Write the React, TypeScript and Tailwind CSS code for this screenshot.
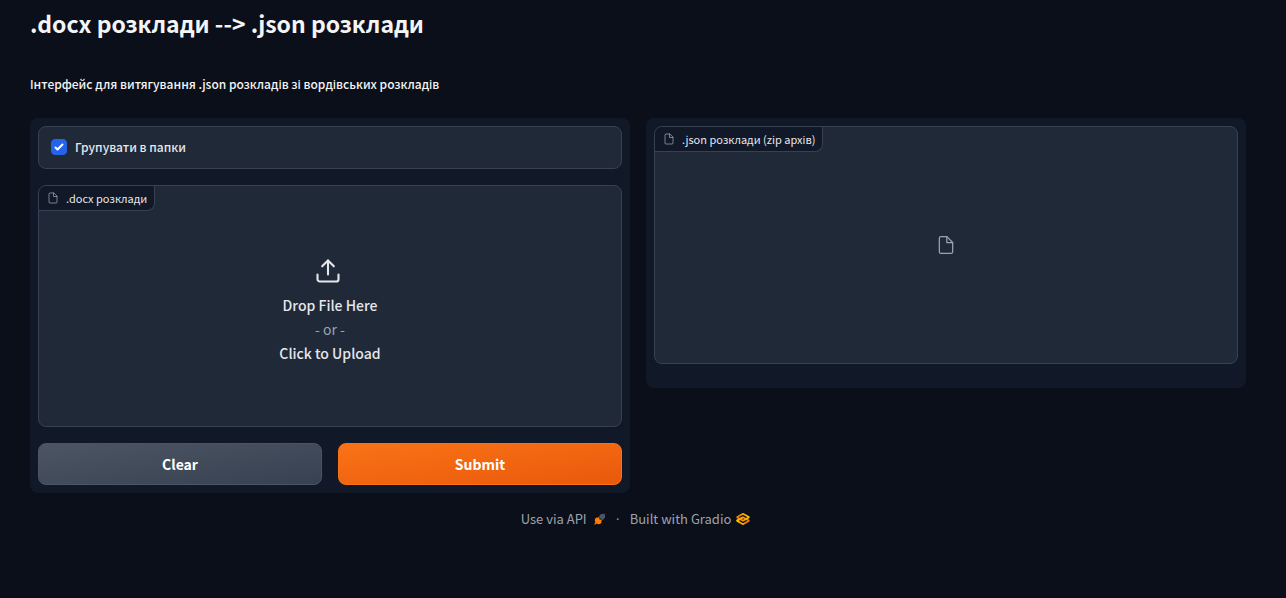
import { useState } from "react";
import type { ReactNode } from "react";

function FileIcon({ className }: { className: string }) {
  return (
    <svg className={className} viewBox="0 0 24 24" fill="none" stroke="currentColor" strokeWidth="1.5" strokeLinecap="round" strokeLinejoin="round" aria-hidden="true">
      <path d="M13 2H6a2 2 0 0 0-2 2v16a2 2 0 0 0 2 2h12a2 2 0 0 0 2-2V9z" />
      <polyline points="13 2 13 9 20 9" />
    </svg>
  );
}

function UploadIcon() {
  return (
    <svg className="mr-1 size-7" viewBox="0 0 24 24" fill="none" stroke="currentColor" strokeWidth="1.8" strokeLinecap="round" strokeLinejoin="round" aria-hidden="true">
      <path d="M21 15v4a2 2 0 0 1-2 2H5a2 2 0 0 1-2-2v-4" />
      <polyline points="17 8 12 3 7 8" />
      <line x1="12" y1="3" x2="12" y2="15" />
    </svg>
  );
}

function RocketIcon() {
  return (
    <svg className="size-3" viewBox="0 0 24 24" aria-hidden="true">
      <path d="M23.500.500l-3.500 2c-3-1.500-5.500-.8-7.500 1.200L10.500 6c-.5 1-.4 2 .4 2.800l4.300 4.300c.8.8 1.800.9 2.800.3l2.300-1.900c2-2 2.700-4.500 1.200-7.500z" fill="#4b5563" />
      <path d="M7.500 9.500l1.500-1.500 2.500 2.500-2 2 2 2 2-2 2.500 2.500-1.500 1.500c1.200 1.800.5 3.500-1 4.500-2.500 1.800-5.500 1.800-8 .2L1.500 23.500.500 22.500 2.800 18.500c-1.600-2.500-1.600-5.500.2-8 1-1.500 2.700-2.200 4.500-1z" fill="#ff7c00" />
      <circle cx="8.500" cy="15.500" r="4" fill="#ff7c00" />
    </svg>
  );
}

function GradioLogo() {
  return (
    <svg className="size-4" viewBox="25 25 526 526" fill="none" strokeWidth="59" strokeLinejoin="bevel" aria-hidden="true">
      <defs>
        <linearGradient id="lower" x1="60" y1="341" x2="429" y2="341" gradientUnits="userSpaceOnUse">
          <stop stopColor="#f9d100" />
          <stop offset="1" stopColor="#f97700" />
        </linearGradient>
        <linearGradient id="upper" x1="513" y1="231" x2="143" y2="231" gradientUnits="userSpaceOnUse">
          <stop stopColor="#f9d100" />
          <stop offset="1" stopColor="#f97700" />
        </linearGradient>
      </defs>
      <path d="M287.500 229L86 344.500L287.500 460L489 344.500L287.500 229Z" stroke="url(#lower)" />
      <path d="M287.500 116L86 231.500L287.500 347L489 231.500L287.500 116Z" stroke="url(#upper)" />
      <path d="M86 344L288 229" stroke="url(#lower)" />
    </svg>
  );
}

function BlockLabel({ children }: { children: ReactNode }) {
  return (
    <div className="absolute top-0 left-0 flex h-[25px] items-center rounded-tl-[7px] rounded-br-lg border-r border-b border-[#374151] bg-[#111827] pr-[7px] pb-px pl-2 text-[11px] leading-4 text-[#e5e7eb]">
      <FileIcon className="mr-[7px] size-3 text-[#9ca3af]" />
      {children}
    </div>
  );
}

export default function App() {
  const [grouped, setGrouped] = useState(true);

  return (
    <div className="min-h-screen bg-[#0b0f19] pr-10 pl-[30px] font-['Noto_Sans_CJK_SC','Noto_Sans',sans-serif] text-[#f3f4f6]">
      <h1 className="pt-[7px] text-[23px] leading-8 font-bold">{".docx розклади --> .json розклади"}</h1>
      <p className="pt-[33px] text-xs leading-6 font-medium">Інтерфейс для витягування .json розкладів зі вордівських розкладів</p>

      <main className="mt-[22px] flex items-start gap-4">
        <section className="flex min-w-0 flex-1 flex-col gap-4 rounded-lg bg-[#111827] p-2">
          <div className="rounded-lg border border-[#374151] bg-[#1f2937] px-3 pt-2 pb-[9px]">
            <label className="flex h-6 items-center gap-2 text-xs font-medium text-[#e5e7eb]">
              <span className="grid size-4 place-items-center">
                <input type="checkbox" checked={grouped} onChange={(e) => setGrouped(e.target.checked)} className="col-start-1 row-start-1 size-4 appearance-none rounded border border-[#374151] bg-[#111827] checked:border-[#2563eb] checked:bg-[#2563eb]" />
                {grouped && (
                  <svg className="pointer-events-none col-start-1 row-start-1 size-4" viewBox="0 0 16 16" fill="white" aria-hidden="true">
                    <path d="M12.207 4.793a1 1 0 010 1.414l-5 5a1 1 0 01-1.414 0l-2-2a1 1 0 011.414-1.414L6.500 9.086l4.293-4.293a1 1 0 011.414 0z" />
                  </svg>
                )}
              </span>
              Групувати в папки
            </label>
          </div>

          <div className="relative rounded-lg border border-[#374151] bg-[#1f2937]">
            <BlockLabel>.docx розклади</BlockLabel>
            <button type="button" className="flex h-60 w-full flex-col items-center justify-center pt-[10px] text-sm leading-6 font-medium text-[#e5e7eb]">
              <UploadIcon />
              <span className="pt-2">Drop File Here</span>
              <span className="font-normal text-[#9ca3af]">- or -</span>
              <span>Click to Upload</span>
            </button>
          </div>

          <div className="flex gap-4">
            <button type="button" className="h-[42px] flex-1 rounded-lg border border-[#4b5563] bg-linear-to-br from-[#4b5563] to-[#374151] text-sm font-bold text-white">Clear</button>
            <button type="button" className="h-[42px] flex-1 rounded-lg border border-[#f97316] bg-linear-to-br from-[#f97316] to-[#ea580c] text-sm font-bold text-white">Submit</button>
          </div>
        </section>

        <section className="min-w-0 flex-1 rounded-lg bg-[#111827] px-2 pt-2 pb-6">
          <div className="relative flex h-[238px] items-center justify-center rounded-lg border border-[#374151] bg-[#1f2937]">
            <BlockLabel>.json розклади (zip архів)</BlockLabel>
            <FileIcon className="size-5 text-[#9ca3af]" />
          </div>
        </section>
      </main>

      <footer className="mt-4 flex items-center justify-center pr-1 text-[13px] leading-5 text-[#9ca3af]">
        <a href="#api" className="flex items-center gap-[7px]">
          Use via API
          <RocketIcon />
        </a>
        <span className="mx-2 w-2 text-center font-['Open_Sans',sans-serif]">·</span>
        <a href="#gradio" className="flex items-center gap-1">
          Built with Gradio
          <GradioLogo />
        </a>
      </footer>
    </div>
  );
}
